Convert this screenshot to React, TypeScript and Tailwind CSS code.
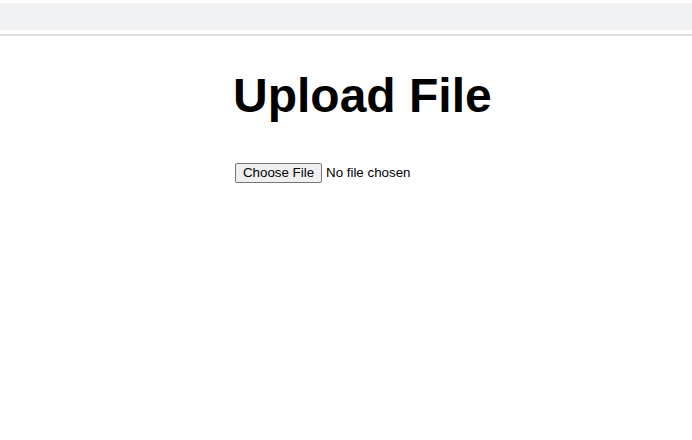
export default function App() {
  return (
    <div className="min-h-[440px] bg-white font-['Liberation_Sans',Arial,sans-serif] text-black">
      {/* top toolbar strip */}
      <div className="pt-[3px]">
        <div className="h-[27px] bg-[#f1f2f4]" />
      </div>
      <div className="mt-[4px] h-[2px] bg-[#dcdcdc]" />

      <main className="pl-[233px] pt-[36px]">
        <h1 className="text-5xl font-bold leading-none">Upload File</h1>
        <form className="mt-[43px] pl-[2px]">
          <input
            type="file"
            className="block text-[13.333px] leading-[16px] file:mr-[4px] file:h-[20px] file:w-[87px] file:rounded-[2px] file:border file:border-solid file:border-[#767676] file:bg-[#efefef] file:px-[6px] file:text-black"
          />
        </form>
      </main>
    </div>
  );
}
